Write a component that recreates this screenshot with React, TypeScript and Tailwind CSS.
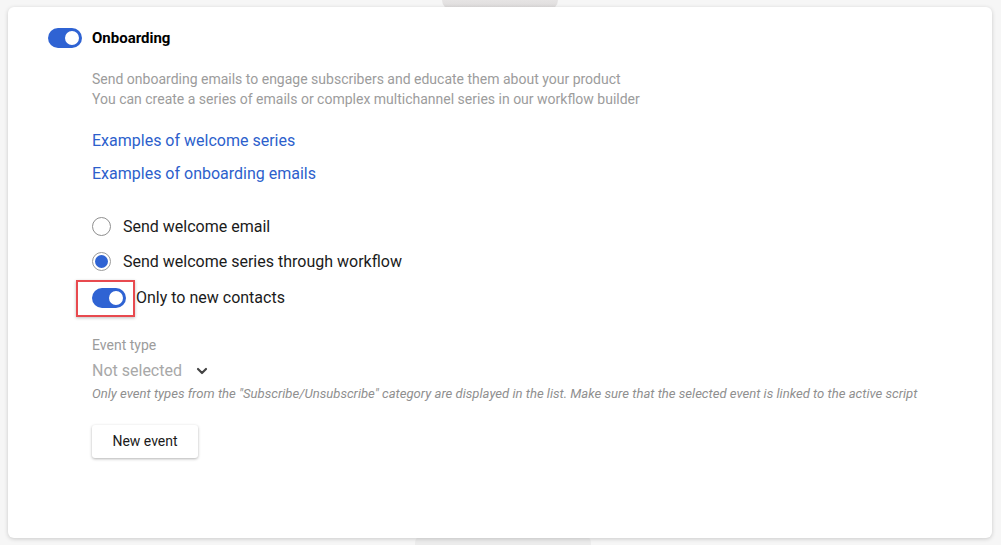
import { ChevronDown } from "lucide-react";

function Toggle({ on = true }: { on?: boolean }) {
  return (
    <span
      className={`relative inline-flex h-[20px] w-[34px] shrink-0 items-center rounded-full ${
        on ? "bg-[#2f63d3]" : "bg-gray-300"
      }`}
    >
      <span
        className={`absolute top-[1px] h-[18px] w-[18px] rounded-full border-2 bg-white ${
          on ? "left-[15px] border-[#2f63d3]" : "left-[1px] border-gray-300"
        }`}
      />
    </span>
  );
}

function Radio({ checked, label }: { checked?: boolean; label: string }) {
  return (
    <label className="flex items-center gap-[12px] text-[16px] leading-[24px] text-[#1b1b1b]">
      <span
        className={`flex h-[19px] w-[19px] items-center justify-center rounded-full border ${
          checked ? "border-[#9a9a9a]" : "border-[#8f8f8f]"
        }`}
      >
        {checked ? <span className="h-[13px] w-[13px] rounded-full bg-[#2f63d3]" /> : null}
      </span>
      {label}
    </label>
  );
}

export default function App() {
  return (
    <div
      className="relative h-[545px] w-[1001px] overflow-hidden bg-[#f6f6f6]"
      style={{ fontFamily: "Roboto, 'Liberation Sans', sans-serif" }}
    >
      {/* soft tab shapes peeking behind the card */}
      <div className="absolute left-[442px] top-[-10px] h-[20px] w-[116px] rounded-b-[10px] bg-gradient-to-b from-[#f0eeee] to-[#dcdada]" />
      <div className="absolute bottom-[-10px] left-[415px] h-[20px] w-[176px] rounded-t-[8px] bg-[#ececec]" />

      <div className="absolute left-[8px] top-[7px] h-[531px] w-[984px] rounded-[6px] bg-white shadow-[0_1px_4px_rgba(0,0,0,0.18)]">
        <div className="pl-[40px] pt-[20px]">
          <div className="flex items-center gap-[10px]">
            <Toggle />
            <span className="text-[15px] font-bold text-black">Onboarding</span>
          </div>

          <div className="pl-[44px]">
            <p className="mt-[19px] text-[14px] leading-[20px] text-[#9c9c9c]">
              Send onboarding emails to engage subscribers and educate them about your product
              <br />
              You can create a series of emails or complex multichannel series in our workflow builder
            </p>

            <div className="mt-[21px] flex flex-col gap-[12px] text-[16px] leading-[21px] text-[#2d5fcc]">
              <a>Examples of welcome series</a>
              <a>Examples of onboarding emails</a>
            </div>

            <div className="mt-[31px] flex flex-col gap-[11px]">
              <Radio label="Send welcome email" />
              <Radio checked label="Send welcome series through workflow" />
            </div>

            <div className="relative mt-[12px] flex items-center gap-[10px]">
              <span className="absolute left-[-16px] top-[-6px] h-[37px] w-[59px] border-2 border-[#e84a4f] shadow-[0_1px_3px_rgba(0,0,0,0.25)]" />
              <Toggle />
              <span className="text-[16px] text-[#1b1b1b]">Only to new contacts</span>
            </div>

            <div className="mt-[26px] text-[14px] leading-[18px] text-[#9c9c9c]">Event type</div>
            <div className="mt-[7px] flex items-center gap-[12px] text-[16px] leading-[20px] text-[#a8a8a8]">
              Not selected
              <ChevronDown className="h-[16px] w-[16px] text-[#444]" strokeWidth={3.2} />
            </div>
            <p className="mt-[4px] text-[13.1px] italic leading-[17px] text-[#8f8f8f]">
              Only event types from the "Subscribe/Unsubscribe" category are displayed in the list. Make sure that the selected event is linked to the active script
            </p>

            <button
              type="button"
              className="mt-[23px] h-[33px] w-[106px] rounded-[3px] bg-white text-[14px] text-[#1b1b1b] shadow-[0_1px_3px_rgba(0,0,0,0.3)]"
            >
              New event
            </button>
          </div>
        </div>
      </div>
    </div>
  );
}
